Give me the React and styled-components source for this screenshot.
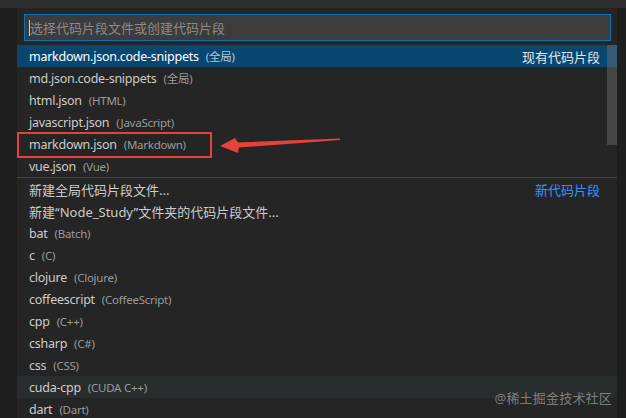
import React from 'react';
import styled, { createGlobalStyle } from 'styled-components';

const GlobalStyle = createGlobalStyle`
  html, body {
    margin: 0;
    padding: 0;
    background: #1e1e1e;
  }
  body {
    font-family: "Noto Sans", "Noto Sans CJK SC", sans-serif;
    -webkit-font-smoothing: antialiased;
  }
`;

const Page = styled.div`
  width: 626px;
  height: 418px;
  overflow: hidden;
  position: relative;
  display: flex;
  flex-direction: column;
  background: #1e1e1e;
`;

const TitleStrip = styled.div`
  height: 8px;
  flex-shrink: 0;
  background: #2e2e2e;
`;

const Body = styled.div`
  flex: 1;
  display: flex;
  padding-left: 17px;
`;

const Panel = styled.div`
  width: 600px;
  background: #252526;
  padding-top: 6px;
  display: flex;
  flex-direction: column;
`;

const InputBox = styled.div`
  margin: 0 6px 0 7px;
  height: 25px;
  border: 1px solid #0e70b8;
  background: #3c3c3c;
  display: flex;
  align-items: center;
  padding-left: 4px;
  font-size: 13px;
  color: #8b8b8b;
`;

const Caret = styled.span`
  display: inline-block;
  width: 1px;
  height: 16px;
  background: #cfcfcf;
`;

const List = styled.div`
  position: relative;
  margin-top: 4px;
`;

const Row = styled.div`
  height: 22px;
  display: flex;
  align-items: center;
  padding: 0 17px 0 12px;
  font-size: 12.5px;
  color: ${p => (p.$selected ? '#ffffff' : '#cccccc')};
  background: ${p => (p.$selected ? '#094771' : p.$hover ? '#2a2d2e' : 'transparent')};
  white-space: nowrap;
`;

const Label = styled.span`
  font-size: ${p => (p.$cjk ? '13px' : '12.5px')};
  letter-spacing: ${p => (p.$cjk ? '0' : '-0.25px')};
`;

const Desc = styled.span`
  margin-left: 7px;
  font-size: 11.5px;
  letter-spacing: -0.25px;
  color: ${p => (p.$selected ? '#b4c8d8' : '#9a9a9a')};
`;

const Tag = styled.span`
  margin-left: auto;
  font-size: 13px;
  color: ${p => (p.$link ? '#3794ff' : '#e6e6e6')};
`;

const Separator = styled.div`
  height: 1px;
  background: #454545;
`;

const ScrollThumb = styled.div`
  position: absolute;
  right: 0;
  top: 0;
  width: 10px;
  height: 100px;
  background: rgba(121, 121, 121, 0.4);
`;

const Highlight = styled.div`
  position: absolute;
  left: 0;
  top: 87px;
  width: 195px;
  height: 26px;
  box-sizing: border-box;
  border: 2px solid #e8413b;
`;

const Arrow = styled.svg`
  position: absolute;
  left: 202px;
  top: 86px;
`;

const Watermark = styled.div`
  position: absolute;
  right: 14px;
  bottom: 11px;
  font-size: 13px;
  color: rgba(200, 200, 200, 0.55);
  letter-spacing: 0.2px;
`;

const existing = [
  { label: 'markdown.json.code-snippets', desc: '(全局)', tag: '现有代码片段', selected: true },
  { label: 'md.json.code-snippets', desc: '(全局)' },
  { label: 'html.json', desc: '(HTML)' },
  { label: 'javascript.json', desc: '(JavaScript)' },
  { label: 'markdown.json', desc: '(Markdown)' },
  { label: 'vue.json', desc: '(Vue)' },
];

const fresh = [
  { label: '新建全局代码片段文件...', tag: '新代码片段', link: true, cjk: true },
  { label: '新建“Node_Study”文件夹的代码片段文件...', cjk: true },
  { label: 'bat', desc: '(Batch)' },
  { label: 'c', desc: '(C)' },
  { label: 'clojure', desc: '(Clojure)' },
  { label: 'coffeescript', desc: '(CoffeeScript)' },
  { label: 'cpp', desc: '(C++)' },
  { label: 'csharp', desc: '(C#)' },
  { label: 'css', desc: '(CSS)' },
  { label: 'cuda-cpp', desc: '(CUDA C++)', hover: true },
  { label: 'dart', desc: '(Dart)' },
];

function Item({ item }) {
  return (
    <Row $selected={item.selected} $hover={item.hover}>
      <Label $cjk={item.cjk}>{item.label}</Label>
      {item.desc && <Desc $selected={item.selected}>{item.desc}</Desc>}
      {item.tag && <Tag $link={item.link}>{item.tag}</Tag>}
    </Row>
  );
}

export default function App() {
  return (
    <>
      <GlobalStyle />
      <Page>
        <TitleStrip />
        <Body>
          <Panel>
            <InputBox>
              <Caret />
              选择代码片段文件或创建代码片段
            </InputBox>
            <List>
              {existing.map(item => <Item key={item.label} item={item} />)}
              <Separator />
              {fresh.map(item => <Item key={item.label} item={item} />)}
              <ScrollThumb />
              <Highlight />
              <Arrow width="124" height="22" viewBox="0 0 124 22">
                <path d="M1 15 L16 7 L19 11.5 L121 7.5 L121 9 L20 16.5 L19 22 Z" fill="#e8413b" />
              </Arrow>
            </List>
          </Panel>
        </Body>
        <Watermark>@稀土掘金技术社区</Watermark>
      </Page>
    </>
  );
}
